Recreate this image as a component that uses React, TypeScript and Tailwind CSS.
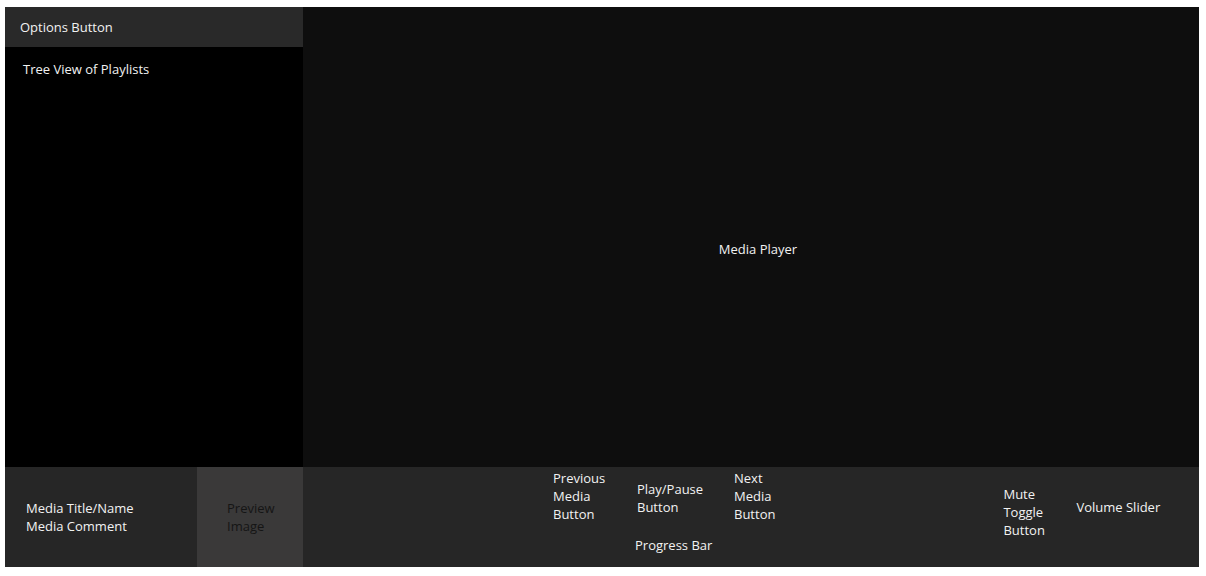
import React from "react";

const font = { fontFamily: "'Open Sans', 'Liberation Sans', sans-serif" };

const Label: React.FC<{ lines: string[]; className?: string }> = ({ lines, className }) => (
  <div className={`leading-[18px] ${className ?? ""}`}>
    {lines.map((l) => (
      <div key={l}>{l}</div>
    ))}
  </div>
);

export default function App() {
  return (
    <div
      className="w-full h-[576px] bg-white pt-[7px] pl-[5px] text-[13px] text-[#f2f2f2]"
      style={font}
    >
      <div className="w-[1194px] h-[560px] flex flex-col">
        {/* top area */}
        <div className="flex h-[460px]">
          <div className="w-[298px] flex flex-col">
            <div className="h-[40px] bg-[#292929] flex items-center pl-[15px] pt-[2px]">Options Button</div>
            <div className="flex-1 bg-black pl-[18px] pt-[13px]">Tree View of Playlists</div>
          </div>
          <div className="flex-1 bg-[#0e0e0e] flex items-center justify-center pt-[26px] pl-[14px]">
            Media Player
          </div>
        </div>

        {/* bottom bar */}
        <div className="flex h-[100px]">
          <div className="w-[192px] bg-[#262626] flex items-center pl-[21px]">
            <Label lines={["Media Title/Name", "Media Comment"]} />
          </div>
          <div className="w-[106px] bg-[#3a3939] flex items-center pl-[30px] text-[#151515]">
            <Label lines={["Preview", "Image"]} />
          </div>
          <div className="flex-1 bg-[#262626] flex items-start">
            <div className="ml-[250px] pt-[2px] flex flex-col">
              <div className="flex">
                <Label className="w-[84px]" lines={["Previous", "Media", "Button"]} />
                <Label className="w-[97px] pt-[11px]" lines={["Play/Pause", "Button"]} />
                <Label lines={["Next", "Media", "Button"]} />
              </div>
              <div className="ml-[82px] mt-[13px] leading-[18px]">Progress Bar</div>
            </div>
            <Label className="ml-[228px] pt-[18px] w-[73px]" lines={["Mute", "Toggle", "Button"]} />
            <div className="pt-[31px] leading-[18px]">Volume Slider</div>
          </div>
        </div>
      </div>
    </div>
  );
}
